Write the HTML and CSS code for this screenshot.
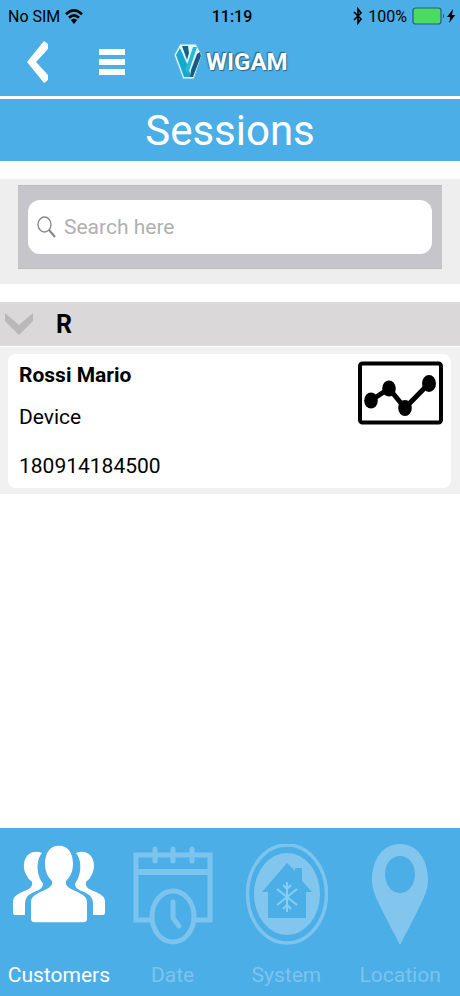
FILE: index.html
```html
<!DOCTYPE html>
<html lang="en">
<head>
<meta charset="utf-8">
<meta name="viewport" content="width=device-width, initial-scale=1">
<title>Sessions</title>
<link rel="stylesheet" href="styles.css">
</head>
<body>
<header class="top">
  <div class="status">
    <div class="status-left">
      <span>No SIM</span>
      <svg width="18" height="15" viewBox="0 0 18 15" aria-hidden="true"><g fill="none" stroke="#000" stroke-width="2.6"><path d="M1 5.2Q9-2.4 17 5.2"/><path d="M4 8.8Q9 4 14 8.8"/></g><path d="M5.8 11Q9 8 12.2 11L9 15z"/></svg>
    </div>
    <time class="clock">11:19</time>
    <div class="status-right">
      <svg width="10" height="18" viewBox="0 0 10 18" aria-hidden="true"><path d="M1 5l7 7-3 4V2l3 4-7 7" fill="none" stroke="#000" stroke-width="1.6"/></svg>
      <span>100%</span>
      <svg width="44" height="18" viewBox="0 0 44 18" aria-hidden="true"><rect x="1" y="1" width="28" height="16" rx="2.5" fill="#4bdb62" stroke="#245e87" stroke-width="1.2"/><path d="M31 6.5q2.5 2.5 0 5z" fill="#245e87"/><path d="M41 2l-6 8h3.200l-1 6 6-8H40z"/></svg>
    </div>
  </div>
  <nav class="nav">
    <button class="icon-button" type="button" aria-label="Back">
      <svg width="22" height="44" viewBox="0 0 22 44"><path d="M22 4v5L10 22l12 13v5l-4 3L1 22 18 1z" fill="#fff"/></svg>
    </button>
    <button class="icon-button menu" type="button" aria-label="Menu">
      <svg width="28" height="28" viewBox="0 0 28 28"><path d="M1 4h26M1 14h26M1 24h26" stroke="#fff" stroke-width="6"/></svg>
    </button>
    <div class="brand">
      <svg width="30" height="38" viewBox="0 0 30 38" aria-hidden="true"><path d="M7 1h16l6 11-8 24H10L1 12z" fill="#e4f8fc" stroke="#5fb4d6"/><path d="M3 12l4-7 8 18 3 11h-7z" fill="#16a9cf"/><path d="M9 3h6l1 7-2 7z" fill="#17628b"/><path d="M15 19l5-15h4L15 31l-3-5z" fill="#28b8d9"/><path d="M18 27l6-16 3-2 1 4-8 21h-3z" fill="#155b85"/></svg>
      <span>WIGAM</span>
    </div>
  </nav>
</header>
<h1 class="title">Sessions</h1>
<main>
  <form class="search-area" role="search">
    <div class="search-bar">
      <label class="search-field">
        <svg width="19" height="22" viewBox="0 0 19 22" aria-hidden="true"><ellipse cx="7.5" cy="8.5" rx="6.5" ry="7.5" fill="none" stroke="#8b8b8d" stroke-width="1.4"/><path d="M12 14l6 7" stroke="#858587" stroke-width="2"/></svg>
        <input type="search" placeholder="Search here" aria-label="Search here">
      </label>
    </div>
  </form>
  <section>
    <h2 class="group">
      <button class="icon-button" type="button" aria-label="Collapse R"><svg width="30" height="22" viewBox="0 0 30 22"><path d="M1 0l14 12L29 0v8L15 22 1 8z" fill="#bab9ba"/></svg></button>
      <span>R</span>
    </h2>
    <div class="group-body">
      <article class="card">
        <div>
          <h3>Rossi Mario</h3>
          <p class="device">Device</p>
          <p>180914184500</p>
        </div>
        <button class="icon-button" type="button" aria-label="Show chart">
          <svg width="85" height="64" viewBox="0 0 85 64"><rect x="2" y="2.500" width="81" height="59" rx="2.5" fill="#fff" stroke="#000" stroke-width="4"/><path d="M13 39.500l18-12 16 19.500L71 22.500" fill="none" stroke="#000" stroke-width="5"/><ellipse cx="13" cy="39.500" rx="6.8" ry="8"/><ellipse cx="31" cy="27.500" rx="6.800" ry="8"/><ellipse cx="47" cy="47" rx="6.8" ry="8"/><ellipse cx="71" cy="22.500" rx="7" ry="8.5"/></svg>
        </button>
      </article>
    </div>
  </section>
</main>
<nav class="tabs">
  <a class="active" href="#customers">
    <svg width="94" height="104" viewBox="0 0 94 104" aria-hidden="true"><g fill="#fff" transform="scale(1 .9)"><path d="M30 10C16 4 8 20 14 34q2 5 6 8c1 7-3 8-11 12Q1 58 1 64v12q0 3 3 3h9V66q0-8 8-12c6-3 10-4 10-10C23 32 25 16 30 10z"/><path d="M64 10c14-6 22 10 16 24q-2 5-6 8c-1 7 3 8 11 12q8 4 8 10v12q0 3-3 3h-9V66q0-8-8-12c-6-3-10-4-10-10 8-12 6-28 1-34z"/><path d="M47 2c9 0 14 8 14 20 0 9-3 15-7 19-1 6 3 8 11 12 7 4 10 6 10 12v18q0 4-4 4H23q-4 0-4-4V65c0-6 3-8 10-12 8-4 12-6 11-12-4-4-7-10-7-19C33 10 38 2 47 2z"/></g></svg>
    <span>Customers</span>
  </a>
  <a href="#date">
    <svg width="80" height="104" viewBox="0 0 80 104" aria-hidden="true"><g fill="none" stroke="#7cc4ed"><path d="M19 76H3V11h74v65H61" stroke-width="5"/><path d="M3 28h74" stroke-width="6"/><path d="M22 5v12M40 5v12M59 5v12" stroke-width="5" stroke-linecap="round"/><ellipse cx="40" cy="72.5" rx="21" ry="25.5" stroke-width="5"/><path d="M40 58v16l6 8" stroke-width="5" stroke-linecap="round"/></g></svg>
    <span>Date</span>
  </a>
  <a href="#system">
    <svg width="84" height="104" viewBox="0 0 84 104" aria-hidden="true"><g transform="translate(1 0)"><ellipse cx="42" cy="50" rx="39.5" ry="49" fill="none" stroke="#7cc4ed" stroke-width="3.5"/><ellipse cx="42" cy="50" rx="33" ry="41" fill="#82c6ee"/><path d="M42 19l8 8v-3h7v13l10 11h-6v26H23V48h-6z" fill="#4baee7"/><path d="M42 38v30M32 45l20 16M52 45L32 61M38 41l4 4 4-4M38 65l4-4 4 4" fill="none" stroke="#8bcdf1" stroke-width="2"/></g></svg>
    <span>System</span>
  </a>
  <a href="#location">
    <svg width="58" height="104" viewBox="0 0 58 104" aria-hidden="true"><path fill="#82c6ee" fill-rule="evenodd" d="M29 0C12 0 1 15 1 36c0 13 7 23 12 34l16 31 16-31c5-11 12-21 12-34C57 15 46 0 29 0zm0 12c9 0 15 8 15 18s-6 19-15 19-15-9-15-19 6-18 15-18z"/></svg>
    <span>Location</span>
  </a>
</nav>
</body>
</html>
```
FILE: styles.css
```css
* { box-sizing: border-box; }

body {
  margin: 0;
  min-height: 100vh;
  display: flex;
  flex-direction: column;
  background: #fff;
  color: #000;
  font-family: Roboto, "Liberation Sans", sans-serif;
  font-size: 21px;
}

h1, h2, h3, p { margin: 0; }
svg { display: block; flex: none; }

.icon-button {
  padding: 0;
  border: 0;
  background: none;
}

.top {
  background: #4baee7;
  border-bottom: 3px solid #fff;
}

.status {
  display: grid;
  grid-template-columns: 1fr auto 1fr;
  align-items: center;
  height: 32px;
  padding: 0 4px 0 8px;
  font-size: 16px;
}

.status-left, .status-right {
  display: flex;
  align-items: center;
  gap: 5px;
}

.status-right { justify-content: flex-end; }
.clock { font-weight: 500; }

.nav {
  display: flex;
  align-items: center;
  height: 64px;
  padding: 0 26px 4px;
}

.menu { margin-left: 50px; }

.brand {
  display: flex;
  align-items: center;
  gap: 3px;
  margin-left: 47px;
  color: #fff;
  font-size: 24px;
  font-weight: bold;
  text-shadow: 1px 1px 1px #286788, -1px -1px 1px #286788;
}

.title {
  padding: 4px 0 2px;
  background: #4baee7;
  color: #fff;
  font-size: 42px;
  font-weight: normal;
  line-height: 56px;
  text-align: center;
}

.search-area {
  margin: 18px 0;
  padding: 6px 18px 15px;
  background: #eee;
}

.search-bar {
  padding: 14px 10px;
  background: #c6c6ca;
  border: solid #bcbcc0;
  border-width: 1px 0;
}

.search-field {
  display: flex;
  align-items: center;
  gap: 8px;
  height: 54px;
  padding: 0 9px;
  border-radius: 12px;
  background: #fff;
}

.search-field input {
  flex: 1;
  min-width: 0;
  padding: 0;
  border: 0;
  outline: 0;
  background: none;
  font: inherit;
}

.search-field input::placeholder { color: #b0b0b0; }

.group {
  display: flex;
  align-items: center;
  gap: 22px;
  height: 45px;
  padding: 0 4px;
  background: #dad8d9;
  border-bottom: 1px solid #fff;
  font-size: 25px;
}

.group-body {
  padding: 7px 9px 6px 8px;
  background: #f1f1f2;
}

.card {
  display: flex;
  justify-content: space-between;
  align-items: flex-start;
  padding: 7px 8px 8px 11px;
  border-radius: 8px;
  background: #fff;
  line-height: 28px;
}

.card h3 { font-size: 21px; }
.device { margin: 14px 0 21px; }

.tabs {
  display: grid;
  grid-template-columns: repeat(4, 1fr);
  height: 168px;
  margin-top: auto;
  padding: 16px 3px 0 2px;
  background: #4baee7;
}

.tabs a {
  display: flex;
  flex-direction: column;
  align-items: center;
  gap: 12px;
  color: #7cc4ed;
  line-height: 30px;
  text-decoration: none;
}

.tabs .active { color: #fff; }
```
